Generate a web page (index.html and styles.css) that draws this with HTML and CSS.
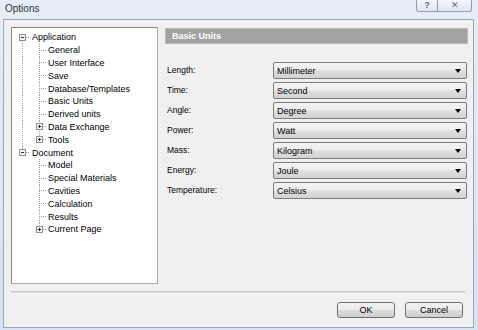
FILE: index.html
```html
<!DOCTYPE html>
<html lang="en">
<head>
    <meta charset="UTF-8">
    <title>Options</title>
    <link rel="stylesheet" href="styles.css">
</head>
<body>
<div class="window">
    <div class="titlebar">
        <div class="caption">Options</div>
        <div class="caption-buttons">
            <div class="cap-btn help">?</div>
            <div class="cap-btn close">✕</div>
        </div>
    </div>

    <div class="client">
        <div class="main">
            <div class="tree">
                <div class="node n-app"><span class="exp minus"></span><span class="txt root-txt">Application</span></div>
                <div class="node n-mid">General</div>
                <div class="node n-mid">User Interface</div>
                <div class="node n-mid">Save</div>
                <div class="node n-mid">Database/Templates</div>
                <div class="node n-mid">Basic Units</div>
                <div class="node n-mid">Derived units</div>
                <div class="node n-midx"><span class="exp plus"></span><span class="txt">Data Exchange</span></div>
                <div class="node n-lastx"><span class="exp plus"></span><span class="txt">Tools</span></div>
                <div class="node n-doc"><span class="exp minus"></span><span class="txt root-txt">Document</span></div>
                <div class="node n-dmid">Model</div>
                <div class="node n-dmid">Special Materials</div>
                <div class="node n-dmid">Cavities</div>
                <div class="node n-dmid">Calculation</div>
                <div class="node n-dmid">Results</div>
                <div class="node n-dlastx"><span class="exp plus"></span><span class="txt">Current Page</span></div>
            </div>

            <div class="panel">
                <div class="panel-head">Basic Units</div>
                <div class="units">
                    <div class="unit-row"><span class="unit-label">Length:</span><div class="combo">Millimeter<span class="arrow"></span></div></div>
                    <div class="unit-row"><span class="unit-label">Time:</span><div class="combo">Second<span class="arrow"></span></div></div>
                    <div class="unit-row"><span class="unit-label">Angle:</span><div class="combo">Degree<span class="arrow"></span></div></div>
                    <div class="unit-row"><span class="unit-label">Power:</span><div class="combo">Watt<span class="arrow"></span></div></div>
                    <div class="unit-row"><span class="unit-label">Mass:</span><div class="combo">Kilogram<span class="arrow"></span></div></div>
                    <div class="unit-row"><span class="unit-label">Energy:</span><div class="combo">Joule<span class="arrow"></span></div></div>
                    <div class="unit-row"><span class="unit-label">Temperature:</span><div class="combo">Celsius<span class="arrow"></span></div></div>
                </div>
            </div>
        </div>

        <div class="separator"></div>

        <div class="buttons">
            <button class="btn">OK</button>
            <button class="btn">Cancel</button>
        </div>
    </div>
</div>
</body>
</html>
```

FILE: styles.css
```css
body {
    margin: 0;
    font-family: "Liberation Sans", Arial, sans-serif;
    font-size: 9px;
    color: #000;
}

.window {
    width: 478px;
    height: 330px;
    box-sizing: border-box;
    padding: 0 4px 2px 3px;
    background: linear-gradient(180deg, #e4edf8 0%, #d6e2f0 100%);
    display: flex;
    flex-direction: column;
}

/* title bar */
.titlebar {
    height: 19px;
    flex-shrink: 0;
    display: flex;
    justify-content: space-between;
    align-items: flex-start;
}

.caption {
    padding: 3px 0 0 2px;
    font-size: 10px;
    color: #333;
}

.caption-buttons {
    display: flex;
    margin-right: 2px;
}

.cap-btn {
    height: 11px;
    border: 1px solid #8d9fb8;
    border-top: none;
    background: linear-gradient(180deg, #f4f7fb 0%, #dfe7f1 100%);
    color: #5b6a80;
    font-size: 9px;
    line-height: 11px;
    text-align: center;
}

.help {
    width: 20px;
    border-radius: 0 0 0 3px;
    font-weight: bold;
}

.close {
    width: 33px;
    border-left: none;
    border-radius: 0 0 3px 0;
}

/* dialog body */
.client {
    flex: 1;
    background: #f0f0f0;
    border: 1px solid #9ba7b6;
    padding: 7px 5px 0 7px;
    display: flex;
    flex-direction: column;
}

.main {
    display: flex;
    gap: 7px;
    height: 257px;
}

/* tree view */
.tree {
    width: 147px;
    flex-shrink: 0;
    box-sizing: border-box;
    background: #fff;
    border: 1px solid #828790;
    border-right-color: #a9acb2;
    border-bottom-color: #a9acb2;
    padding-top: 3px;
}

.node {
    height: 12.8px;
    display: flex;
    align-items: center;
    padding-left: 36px;
    white-space: nowrap;
    background-repeat: no-repeat;
}

.exp {
    width: 7px;
    height: 7px;
    box-sizing: border-box;
    border: 1px solid #919191;
    background-color: #f4f4f4;
    background-repeat: no-repeat;
    flex-shrink: 0;
}

.exp.minus {
    background-image: linear-gradient(#2b2b2b, #2b2b2b);
    background-position: 1px 2px;
    background-size: 3px 1px;
}

.exp.plus {
    background-image: linear-gradient(#2b2b2b, #2b2b2b), linear-gradient(#2b2b2b, #2b2b2b);
    background-position: 1px 2px, 2px 1px;
    background-size: 3px 1px, 1px 3px;
}

.txt {
    margin-left: 5px;
}

.root-txt {
    margin-left: 6px;
}

/* root rows: box at 7px, text at 20px */
.n-app,
.n-doc {
    padding-left: 7px;
}

.n-app {
    background-image:
        repeating-linear-gradient(180deg, #a0a0a0 0 1px, transparent 1px 2px),
        repeating-linear-gradient(90deg, #a0a0a0 0 1px, transparent 1px 2px);
    background-position: 10px 100%, 14px 50%;
    background-size: 1px 50%, 4px 1px;
}

.n-doc {
    background-image:
        repeating-linear-gradient(180deg, #a0a0a0 0 1px, transparent 1px 2px),
        repeating-linear-gradient(90deg, #a0a0a0 0 1px, transparent 1px 2px);
    background-position: 10px 0, 14px 50%;
    background-size: 1px 50%, 4px 1px;
}

.n-mid {
    background-image:
        repeating-linear-gradient(180deg, #a0a0a0 0 1px, transparent 1px 2px),
        repeating-linear-gradient(180deg, #a0a0a0 0 1px, transparent 1px 2px),
        repeating-linear-gradient(90deg, #a0a0a0 0 1px, transparent 1px 2px);
    background-position: 10px 0, 27px 0, 27px 50%;
    background-size: 1px 100%, 1px 100%, 7px 1px;
}

.n-midx,
.n-lastx,
.n-dlastx {
    padding-left: 24px;
}

.n-midx {
    background-image:
        repeating-linear-gradient(180deg, #a0a0a0 0 1px, transparent 1px 2px),
        repeating-linear-gradient(180deg, #a0a0a0 0 1px, transparent 1px 2px),
        repeating-linear-gradient(90deg, #a0a0a0 0 1px, transparent 1px 2px);
    background-position: 10px 0, 27px 0, 31px 50%;
    background-size: 1px 100%, 1px 100%, 3px 1px;
}

.n-lastx {
    background-image:
        repeating-linear-gradient(180deg, #a0a0a0 0 1px, transparent 1px 2px),
        repeating-linear-gradient(180deg, #a0a0a0 0 1px, transparent 1px 2px),
        repeating-linear-gradient(90deg, #a0a0a0 0 1px, transparent 1px 2px);
    background-position: 10px 0, 27px 0, 31px 50%;
    background-size: 1px 100%, 1px 50%, 3px 1px;
}

.n-dmid {
    background-image:
        repeating-linear-gradient(180deg, #a0a0a0 0 1px, transparent 1px 2px),
        repeating-linear-gradient(90deg, #a0a0a0 0 1px, transparent 1px 2px);
    background-position: 27px 0, 27px 50%;
    background-size: 1px 100%, 7px 1px;
}

.n-dlastx {
    background-image:
        repeating-linear-gradient(180deg, #a0a0a0 0 1px, transparent 1px 2px),
        repeating-linear-gradient(90deg, #a0a0a0 0 1px, transparent 1px 2px);
    background-position: 27px 0, 31px 50%;
    background-size: 1px 50%, 3px 1px;
}

/* right panel */
.panel {
    width: 303px;
    flex-shrink: 0;
    padding-top: 1px;
}

.panel-head {
    height: 16px;
    box-sizing: border-box;
    background: #a3a3a3;
    border: 1px solid #b9b9b9;
    color: #fff;
    font-weight: bold;
    font-size: 9px;
    line-height: 14px;
    padding-left: 6px;
}

.units {
    margin-top: 18px;
}

.unit-row {
    height: 20px;
    display: flex;
    align-items: flex-start;
}

.unit-label {
    width: 108px;
    padding-left: 2px;
    box-sizing: border-box;
    line-height: 17px;
    font-size: 8.5px;
}

.combo {
    width: 194px;
    height: 17px;
    box-sizing: border-box;
    border: 1px solid #7b7b7b;
    border-radius: 2px;
    background: linear-gradient(180deg, #f4f4f4 0%, #ececec 48%, #dedede 52%, #d3d3d3 100%);
    padding: 0 5px 0 3px;
    display: flex;
    align-items: center;
    justify-content: space-between;
}

.arrow {
    width: 0;
    height: 0;
    border-left: 3px solid transparent;
    border-right: 3px solid transparent;
    border-top: 4px solid #000;
}

/* footer */
.separator {
    margin: 7px 3px 0 0;
    height: 1px;
    background: #c6c6c6;
    border-bottom: 1px solid #e0e0e0;
}

.buttons {
    margin-top: 9px;
    display: flex;
    justify-content: flex-end;
    gap: 10px;
    padding-right: 5px;
}

.btn {
    width: 58px;
    height: 16px;
    padding: 0;
    border: 1px solid #707070;
    border-radius: 3px;
    background: linear-gradient(180deg, #f2f2f2 0%, #ebebeb 48%, #dddddd 52%, #cfcfcf 100%);
    font-family: "Liberation Sans", Arial, sans-serif;
    font-size: 9px;
    color: #000;
}
```
